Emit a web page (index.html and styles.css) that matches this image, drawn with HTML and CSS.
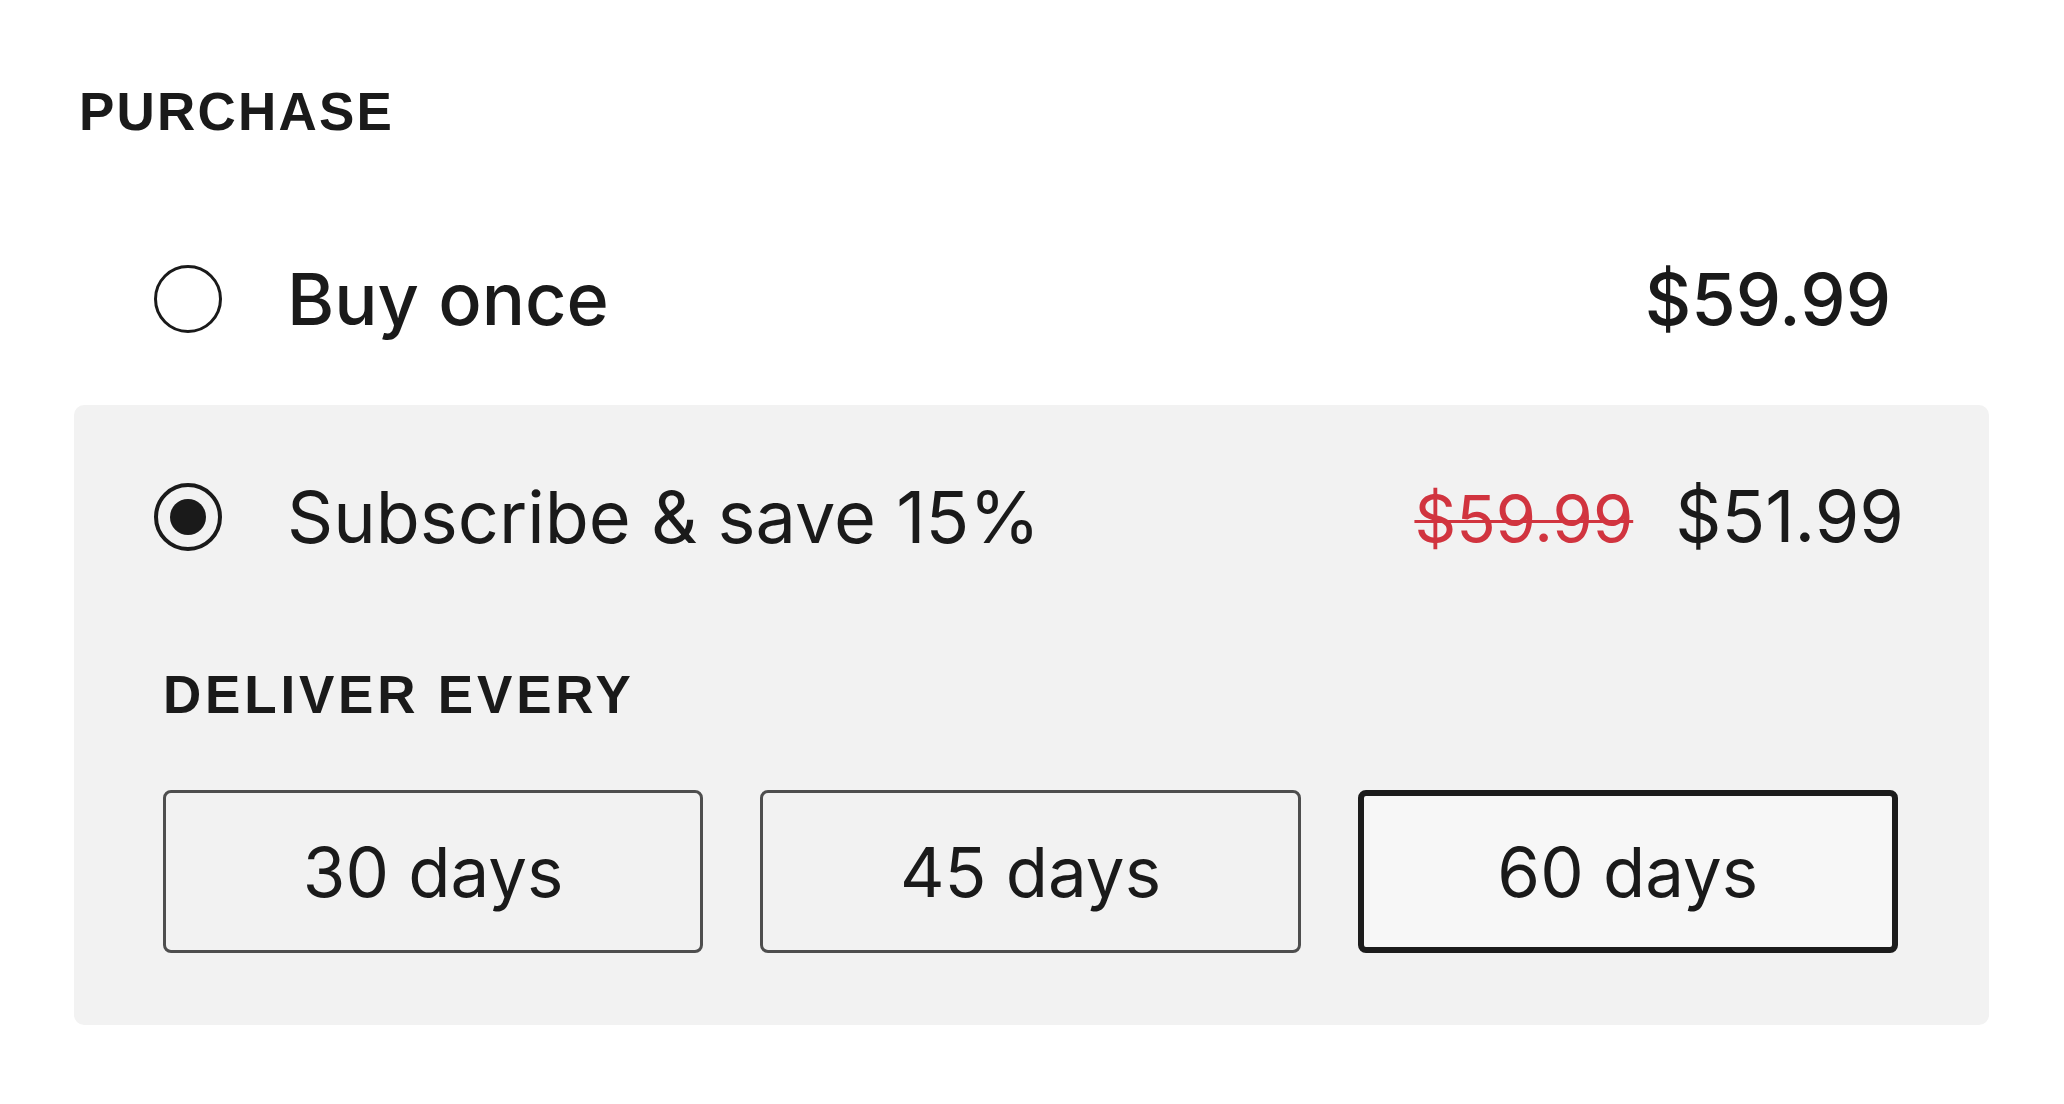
FILE: index.html
```html
<!DOCTYPE html>
<html lang="en">
<head>
<meta charset="utf-8">
<title>Purchase</title>
<link rel="stylesheet" href="styles.css">
</head>
<body>
<div class="purchase">
  <h2 class="label purchase-title">PURCHASE</h2>
  <div class="option option-once">
    <span class="radio"></span>
    <span class="option-name">Buy once</span>
    <span class="price price-once">$59.99</span>
  </div>
  <div class="panel">
    <div class="option option-sub">
      <span class="radio radio-on"><span class="radio-dot"></span></span>
      <span class="option-name">Subscribe &amp; save 15%</span>
      <span class="prices">
        <s class="price-old">$59.99</s>
        <span class="price">$51.99</span>
      </span>
    </div>
    <div class="label deliver">DELIVER EVERY</div>
    <div class="intervals">
      <button class="interval">30 days</button>
      <button class="interval">45 days</button>
      <button class="interval interval-on">60 days</button>
    </div>
  </div>
</div>
</body>
</html>
```

FILE: styles.css
```css
* {
  box-sizing: border-box;
}

body {
  margin: 0;
  background: #ffffff;
  color: #1a1a1a;
  font-family: "Inter", "Noto Sans", sans-serif;
}

.purchase {
  width: 1915px;
  margin-left: 74px;
  padding-top: 85px;
}

.label {
  margin: 0;
  font-family: "Liberation Sans", Arial, sans-serif;
  font-weight: 700;
  font-size: 53px;
  line-height: 53px;
  letter-spacing: 2.2px;
  color: #1a1a1a;
}

.purchase-title {
  padding-left: 5px;
}

.option {
  display: flex;
  align-items: center;
  height: 72px;
}

.option-once {
  margin-top: 125px;
  padding-left: 80px;
  padding-right: 98px;
  font-weight: 500;
}

.option-sub {
  margin-right: -6px;
  font-weight: 400;
}

.radio {
  flex: none;
  width: 68px;
  height: 68px;
  border: 3.5px solid #1a1a1a;
  border-radius: 50%;
  display: flex;
  align-items: center;
  justify-content: center;
}

.radio-on {
  border-width: 4px;
}

.radio-dot {
  width: 36px;
  height: 36px;
  border-radius: 50%;
  background: #1a1a1a;
}

.option-name {
  margin-left: 65px;
  font-size: 72px;
  line-height: 72px;
  flex: 1;
  white-space: nowrap;
}

.price {
  font-size: 72px;
  line-height: 72px;
  white-space: nowrap;
}

.prices {
  display: flex;
  align-items: baseline;
  gap: 42px;
}

.price-old {
  font-size: 65px;
  line-height: 72px;
  color: #d1343f;
  text-decoration-thickness: 3px;
}

.panel {
  margin-top: 70px;
  background: #f2f2f2;
  border-radius: 10px;
  padding: 76px 91px 72px 80px;
}

.deliver {
  margin-top: 115px;
  padding-left: 9px;
  letter-spacing: 3.8px;
}

.intervals {
  margin-top: 69px;
  margin-left: 9px;
  display: grid;
  grid-template-columns: repeat(3, 1fr);
  gap: 57px;
}

.interval {
  height: 163px;
  border: 3px solid #4e4e4e;
  border-radius: 8px;
  background: transparent;
  color: #1a1a1a;
  font-family: "Inter", "Noto Sans", sans-serif;
  font-size: 69px;
  font-weight: 400;
  padding: 0;
}

.interval-on {
  border: 6px solid #1c1c1c;
  background: #f7f7f7;
}
```
